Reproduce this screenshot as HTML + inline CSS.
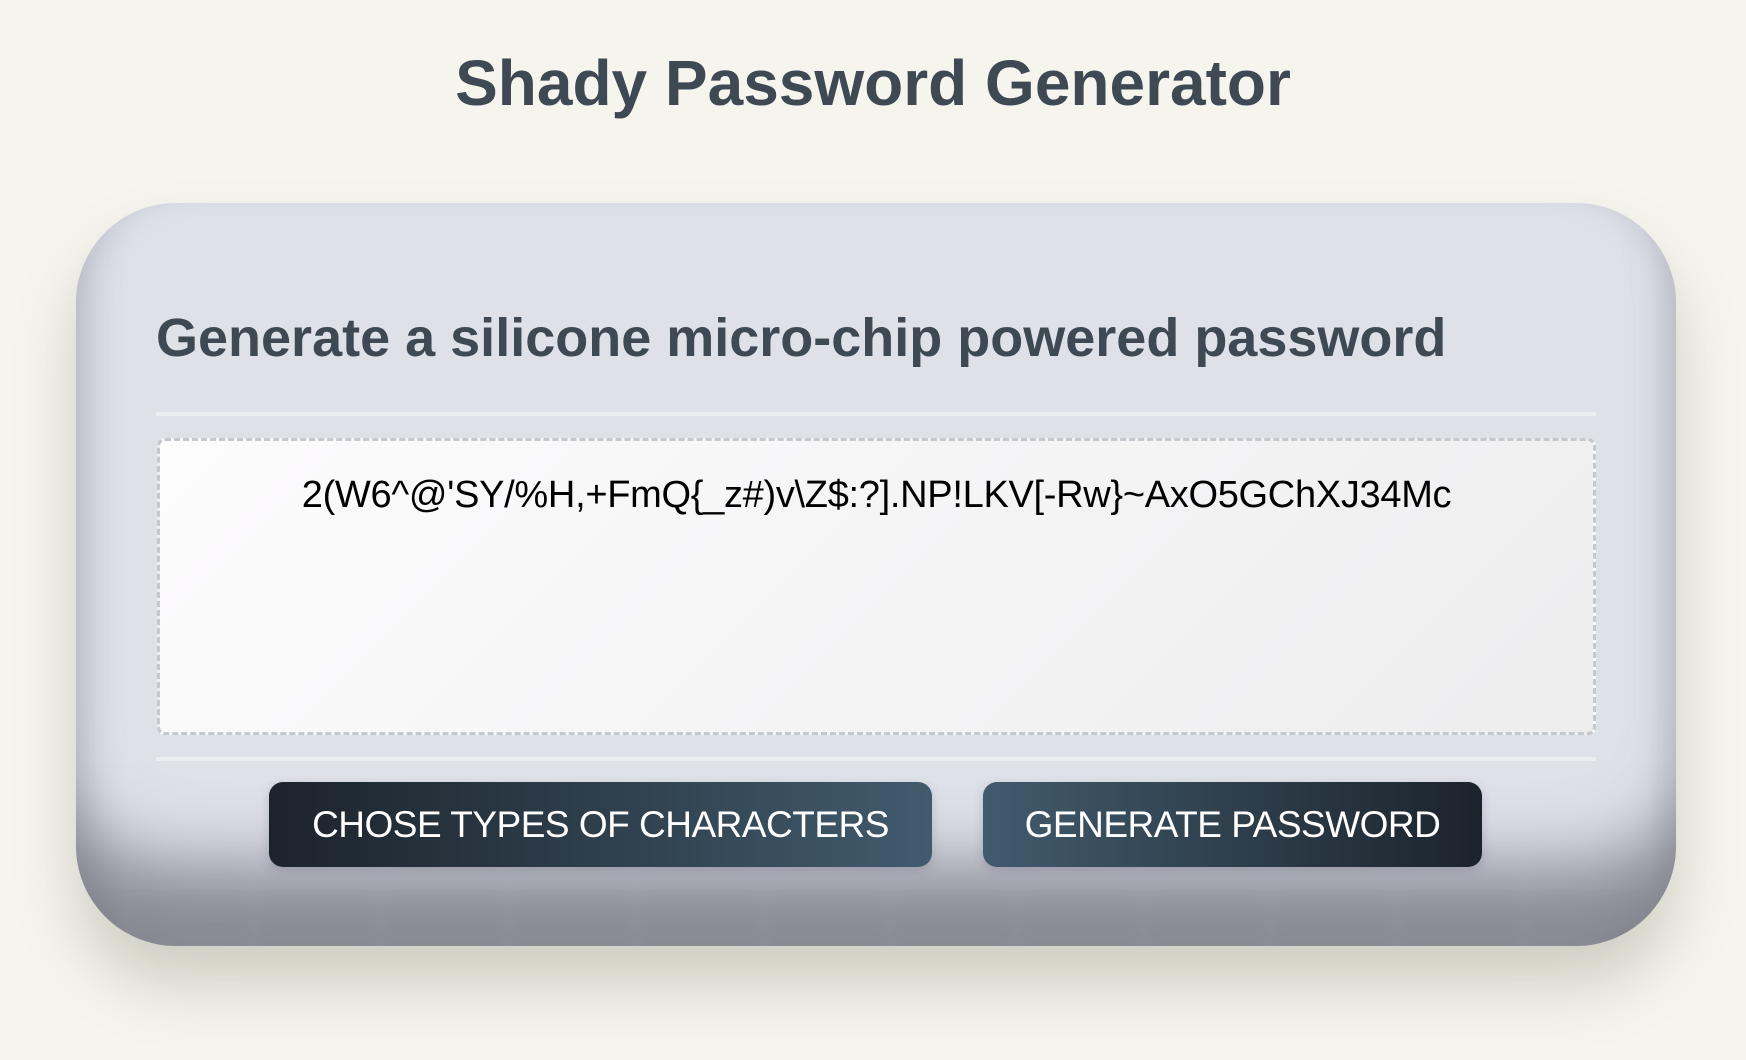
<!DOCTYPE html>
<html><head><meta charset="utf-8"><style>
html,body{margin:0;padding:0}
body{width:1746px;height:1060px;background:#f5f5ee;font-family:"Liberation Sans",Arial,sans-serif;position:relative;overflow:hidden}
h1{position:absolute;top:48px;left:0;width:100%;text-align:center;margin:0;font-size:64px;font-weight:bold;color:#3f4954;line-height:1.1}
.card{position:absolute;left:76px;top:203px;width:1600px;height:743px;border-radius:100px;background:#dfe1e9;
box-shadow:inset 0 -110px 70px -30px rgba(100,100,110,.7),inset 30px 0 30px -20px rgba(150,150,165,.35),inset -30px 0 30px -20px rgba(150,150,165,.35),0 40px 60px rgba(120,120,100,.3)}
h2{position:absolute;left:156px;top:306px;margin:0;font-size:54px;font-weight:bold;color:#3f4954;line-height:1.2}
.hr{position:absolute;left:156px;width:1440px;height:4px;background:#ecedf0}
.ta{position:absolute;left:157px;top:438px;width:1439px;height:297px;box-sizing:border-box;border:3px dashed #c5c8cf;border-radius:8px;background:linear-gradient(135deg,#fdfcfd,#ededee);text-align:center;font-size:38px;color:#000;padding-top:33px;letter-spacing:-0.3px}
.btn{position:absolute;top:782px;height:85px;border-radius:14px;color:#fff;font-size:37px;line-height:85px;text-align:center;box-shadow:0 4px 10px rgba(100,100,130,.3);letter-spacing:-0.5px}
</style></head><body>
<h1>Shady Password Generator</h1>
<div class="card"></div>
<h2>Generate a silicone micro-chip powered password</h2>
<div class="hr" style="top:412px"></div>
<div class="ta">2(W6^@'SY/%H,+FmQ{_z#)v\Z$:?].NP!LKV[-Rw}~AxO5GChXJ34Mc</div>
<div class="hr" style="top:757px"></div>
<div class="btn" style="left:269px;width:663px;background:linear-gradient(90deg,#1c232b,#415b6d)">CHOSE TYPES OF CHARACTERS</div>
<div class="btn" style="left:983px;width:499px;background:linear-gradient(90deg,#415b6d,#1c232b)">GENERATE PASSWORD</div>
</body></html>
